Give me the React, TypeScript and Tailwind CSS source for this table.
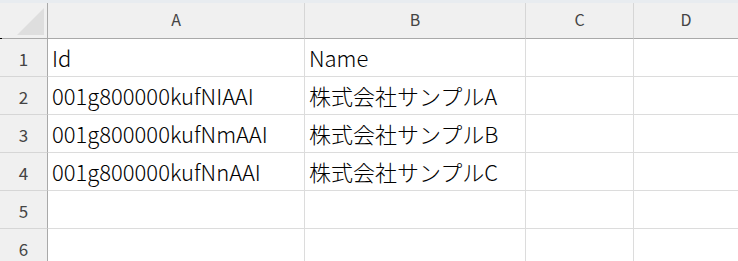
const font = { fontFamily: '"Noto Sans CJK JP", "Noto Sans", sans-serif' };

const columns = ["A", "B", "C", "D"];

const rows: string[][] = [
  ["Id", "Name", "", ""],
  ["001g800000kufNIAAI", "株式会社サンプルA", "", ""],
  ["001g800000kufNmAAI", "株式会社サンプルB", "", ""],
  ["001g800000kufNnAAI", "株式会社サンプルC", "", ""],
  ["", "", "", ""],
  ["", "", "", ""],
];

export default function App() {
  return (
    <div
      className="w-[738px] h-[261px] overflow-hidden bg-white font-['Noto_Sans_CJK_JP',sans-serif]"
      style={font}
    >
      {/* top strip */}
      <div className="h-[3px] bg-[#e8ecf0]" />

      <div className="grid grid-cols-[48px_257px_221px_108px_1fr]">
        {/* header row */}
        <div className="relative h-[36px] bg-[#f0f0f0] border-b border-r border-[#a9a9a9]">
          <div className="absolute left-[17px] top-[5px] w-0 h-0 border-l-[27px] border-l-transparent border-b-[27px] border-b-[#dedede]" />
          <div className="absolute left-0 bottom-[-1px] w-[2px] h-[1px] bg-black" />
        </div>
        {columns.map((c, i) => (
          <div
            key={c}
            className={
              "h-[36px] bg-[#f0f0f0] border-b border-[#a9a9a9] flex items-center justify-center text-[16px] text-[#444] pb-[3px] " +
              (i < columns.length - 1 ? "border-r border-r-[#d6d6d6]" : "")
            }
          >
            {c}
          </div>
        ))}

        {/* data rows */}
        {rows.map((r, ri) => (
          <Row key={ri} n={ri + 1} cells={r} />
        ))}
      </div>
    </div>
  );
}

function Row({ n, cells }: { n: number; cells: string[] }) {
  return (
    <>
      <div className="h-[38px] bg-[#f0f0f0] border-r border-r-[#a9a9a9] border-b border-b-[#d6d6d6] flex items-center justify-center text-[17px] text-[#444] pt-[2px]">
        {n}
      </div>
      {cells.map((v, i) => (
        <div
          key={i}
          className={
            "h-[38px] border-b border-[#dcdcdc] flex items-center pl-[4px] pb-[2px] text-[22px] font-light leading-none text-black whitespace-nowrap overflow-hidden " +
            (i < cells.length - 1 ? "border-r" : "")
          }
        >
          {v}
        </div>
      ))}
    </>
  );
}
